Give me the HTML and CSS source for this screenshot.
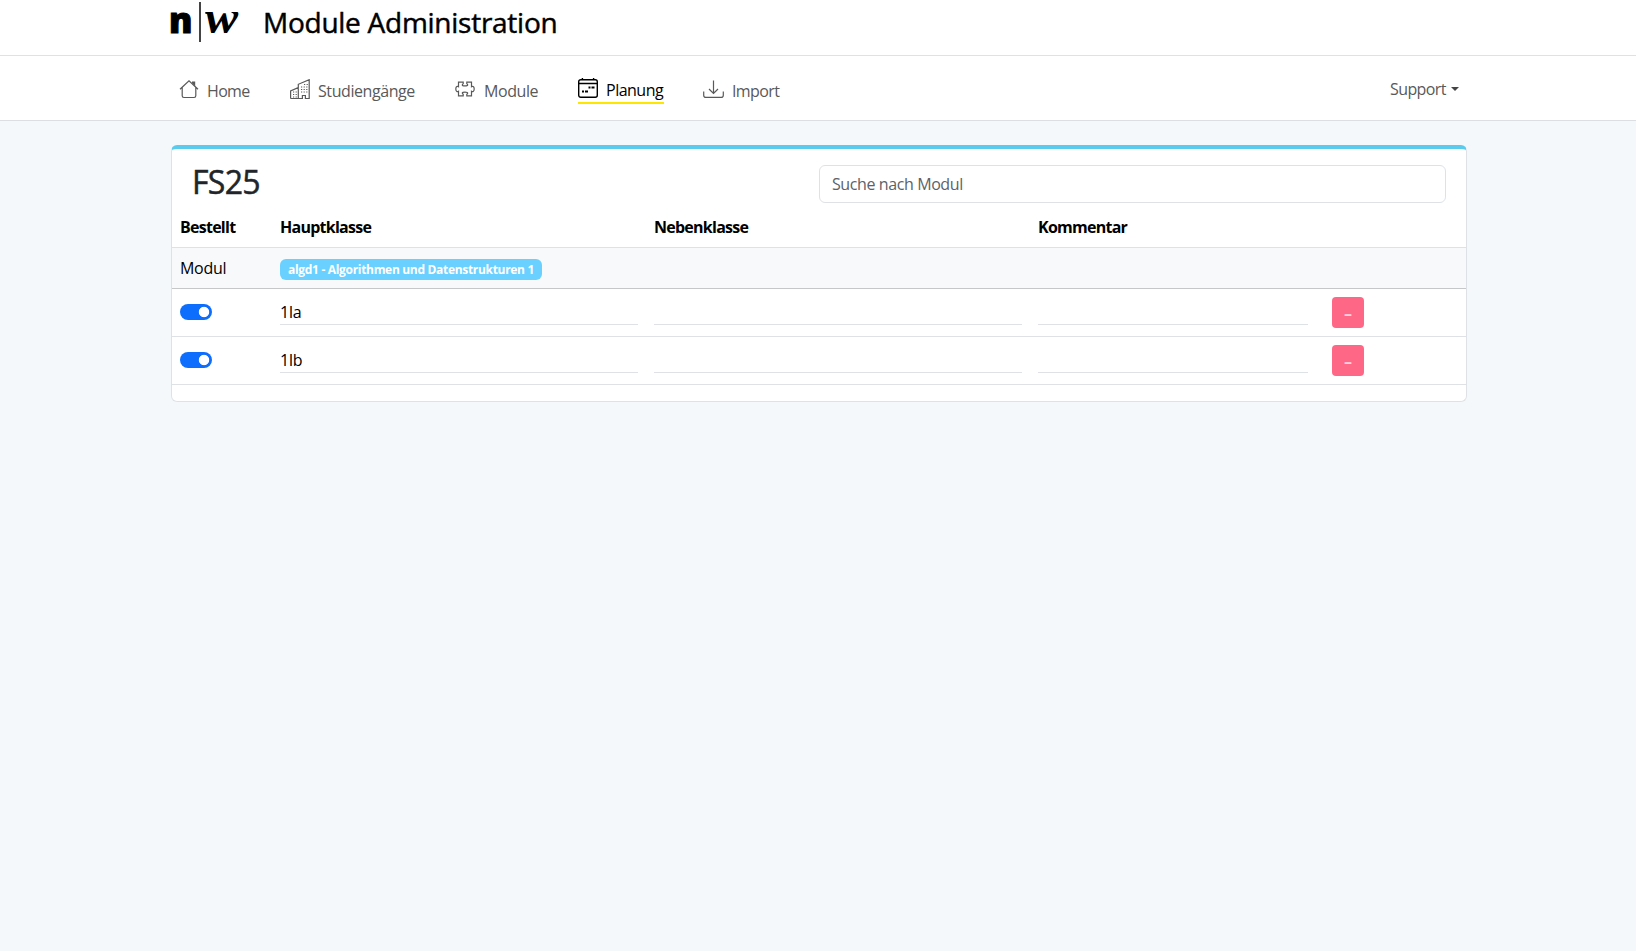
FILE: index.html
```
<!DOCTYPE html>
<html lang="de">
<head>
<meta charset="utf-8">
<title>Module Administration</title>
<link rel="stylesheet" href="styles.css">
</head>
<body>
<header class="brand-bar">
  <div class="container brand">
    <div class="logo"><span class="logo-n">n</span><span class="logo-bar"></span><span class="logo-w">w</span></div>
    <span class="title">Module Administration</span>
  </div>
</header>
<nav class="nav-bar">
  <div class="container nav">
    <a class="link home">
      <svg width="20" height="20" viewBox="0 0 20 20"><path d="M1 10.200 10 1.800l9 8.400M3.200 8.500v8.300q0 1.700 1.700 1.700h10.200q1.700 0 1.700-1.700V8.500"/><path class="solid" d="M13 4V2.500h3.200V7.500z"/></svg>
      <span>Home</span>
    </a>
    <a class="link study">
      <svg width="20" height="20" viewBox="0 0 20 20"><path d="M.6 19.500V12l7.700-3.400V5.300L19.200.7v18.800h-3.800v-3h-3v3H.6M8.300 8.600v10.900"/><path class="dots" d="M11 8h7M11 10.500h7M11 13h7M14 5.500h4M3 13h4M3 15.500h4M3 18h4"/></svg>
      <span>Studiengänge</span>
    </a>
    <a class="link module">
      <svg width="20" height="20" viewBox="0 0 20 20"><path d="M3.500 3.200h4.700v1.500q-.9.500-.9 1.200 0 1 2.700 1t2.700-1q0-.7-.9-1.200V3.200h4.700v4.500q.9-.6 1.700-.1 1 .6 1 2.400t-1 2.400q-.8.500-1.700-.1v4.500h-4.700v-1.500q.9-.5.9-1.200 0-1-2.700-1t-2.700 1q0 .7.900 1.200v1.500H3.500v-4.500q-.9.600-1.700.1-1-.6-1-2.400t1-2.400q.8-.5 1.700.1z"/></svg>
      <span>Module</span>
    </a>
    <a class="link planning active">
      <svg width="20" height="20" viewBox="0 0 20 20"><rect x=".7" y="1.700" width="18.600" height="17.600" rx="2"/><path d="M.6 5.500h18.800M4.400 0v2M15.600 0v2"/><path class="marks" d="M10.500 9.500h2M13.500 9.500h3M4 13.500h2M7 13.500h3"/></svg>
      <span>Planung</span>
    </a>
    <a class="link import">
      <svg width="21" height="20" viewBox="0 0 21 20"><path d="M.7 12.500v3.700q0 2.200 2.200 2.200h15.200q2.200 0 2.200-2.200v-3.700M10.500 1.500v12.800M6 10l4.500 4.500L15 10"/></svg>
      <span>Import</span>
    </a>
    <a class="support"><span>Support</span><i class="caret"></i></a>
  </div>
</nav>
<main class="container">
  <section class="card">
    <div class="card-head">
      <h1>FS25</h1>
      <input class="search" type="text" placeholder="Suche nach Modul">
    </div>
    <div class="row head"><span>Bestellt</span><span>Hauptklasse</span><span>Nebenklasse</span><span>Kommentar</span></div>
    <div class="row group"><span>Modul</span><span class="badge"><span>algd1 - Algorithmen und Datenstrukturen 1</span></span></div>
    <div class="row item">
      <span class="switch"></span><span class="field">1Ia</span><span class="field"></span><span class="field"></span><button class="remove">–</button>
    </div>
    <div class="row item">
      <span class="switch"></span><span class="field">1Ib</span><span class="field"></span><span class="field"></span><button class="remove">–</button>
    </div>
  </section>
</main>
</body>
</html>
```
FILE: styles.css
```
* { box-sizing: border-box; }
body {
  margin: 0;
  background: #f4f8fb;
  color: #000;
  font: 16px/24px "Open Sans", "Noto Sans", sans-serif;
}
.container { width: 1296px; margin-left: 171px; }
.brand-bar { height: 56px; background: #fff; border-bottom: 1px solid #dee2e6; }
.brand { display: flex; }
.logo { display: flex; width: 92px; height: 42px; padding-top: 2px; }
.logo-n { width: 27px; margin-left: -2px; font: 800 35px/36px "Open Sans", sans-serif; -webkit-text-stroke: 1px #000; }
.logo-bar { width: 2px; height: 40px; margin-left: 3px; background: #444; }
.logo-w { width: 36px; margin-left: 4px; font: italic bold 46px/31px "Liberation Serif", serif; transform: scaleX(1.08); transform-origin: left; }
.title { padding-top: 1px; font-size: 28px; line-height: 42px; font-weight: 500; letter-spacing: -0.26px; white-space: nowrap; -webkit-text-stroke: 0.45px currentColor; }
.nav-bar { height: 65px; background: #fff; border-bottom: 1px solid #dcdfe2; }
.nav { display: flex; align-items: flex-start; padding-top: 22px; }
.link { display: flex; gap: 8px; height: 26px; color: #595959; letter-spacing: -0.42px; white-space: nowrap; }
.link span { margin-top: 1px; }
.link svg { flex: none; fill: none; stroke: currentColor; stroke-width: 1.2; margin-top: 1px; }
.home { width: 110px; padding-left: 8px; letter-spacing: -0.65px; }
.study { width: 166px; padding-left: 9px; }
.module { width: 131px; padding-left: 8px; }
.module span { margin-left: 1px; }
.planning { width: 86px; letter-spacing: -0.5px; }
.import { margin-left: 39px; letter-spacing: -0.6px; }
.active { color: #000; border-bottom: 2px solid #ffe600; }
.link.active span { margin-top: 0; }
.link.active svg { margin-top: 0; stroke-width: 1.400; }
.solid { fill: #595959; stroke: none; }
.dots { stroke-dasharray: 1.2 1.4; }
.marks { stroke-width: 2; }
.support { display: flex; align-items: center; gap: 5px; margin: -1px 0 0 auto; padding-right: 8px; color: #595959; letter-spacing: -0.6px; }
.support span { width: 56px; }
.caret { border: 4px solid transparent; border-top-color: #444; border-bottom: 0; }
.card { height: 257px; margin-top: 24px; background: #fff; border: 1px solid #dee2e6; border-top: 4px solid #5bcbed; border-radius: 6px; }
.card-head { display: flex; justify-content: space-between; height: 62px; padding: 16px 20px 0; }
h1 { margin: -2px 0 0; font-size: 32px; line-height: 38px; font-weight: 500; color: #212529; letter-spacing: -0.7px; -webkit-text-stroke: 0.5px currentColor; }
.search { width: 627px; height: 38px; padding: 6px 12px; border: 1px solid #dee2e6; border-radius: 6px; font: inherit; letter-spacing: -0.4px; }
.search::placeholder { color: #5c6268; opacity: 1; }
.row { display: grid; grid-template-columns: 84px 358px 368px 270px 32px; column-gap: 16px; padding: 0 8px; border-bottom: 1px solid #dee2e6; }
.head { height: 37px; padding-top: 4px; font-weight: 700; letter-spacing: -0.74px; }
.group { height: 41px; padding-top: 8px; background: #f8f9fb; border-color: #c6c7c8; letter-spacing: -0.3px; }
.badge { justify-self: start; width: 262px; height: 21px; margin-top: 3px; padding: 0 8px; border-radius: 6px; background: #69d0ff; color: #fff; font-size: 12px; font-weight: 700; line-height: 21px; white-space: nowrap; letter-spacing: -0.31px; }
.item { height: 48px; padding-top: 8px; }
.field { height: 28px; padding-top: 3px; border-bottom: 1px solid #dee2e6; letter-spacing: -0.45px; }
.switch { width: 32px; height: 16px; margin-top: 7px; border-radius: 8px; background: radial-gradient(circle at 24px 8px, #fff 4.800px, #0d6efd 5.600px); }
.remove { width: 32px; height: 31px; margin-left: 8px; padding: 0; border: 0; border-radius: 4px; background: #ff6787; color: #ffd0da; font: bold 16px/28px "Open Sans", sans-serif; }
```
